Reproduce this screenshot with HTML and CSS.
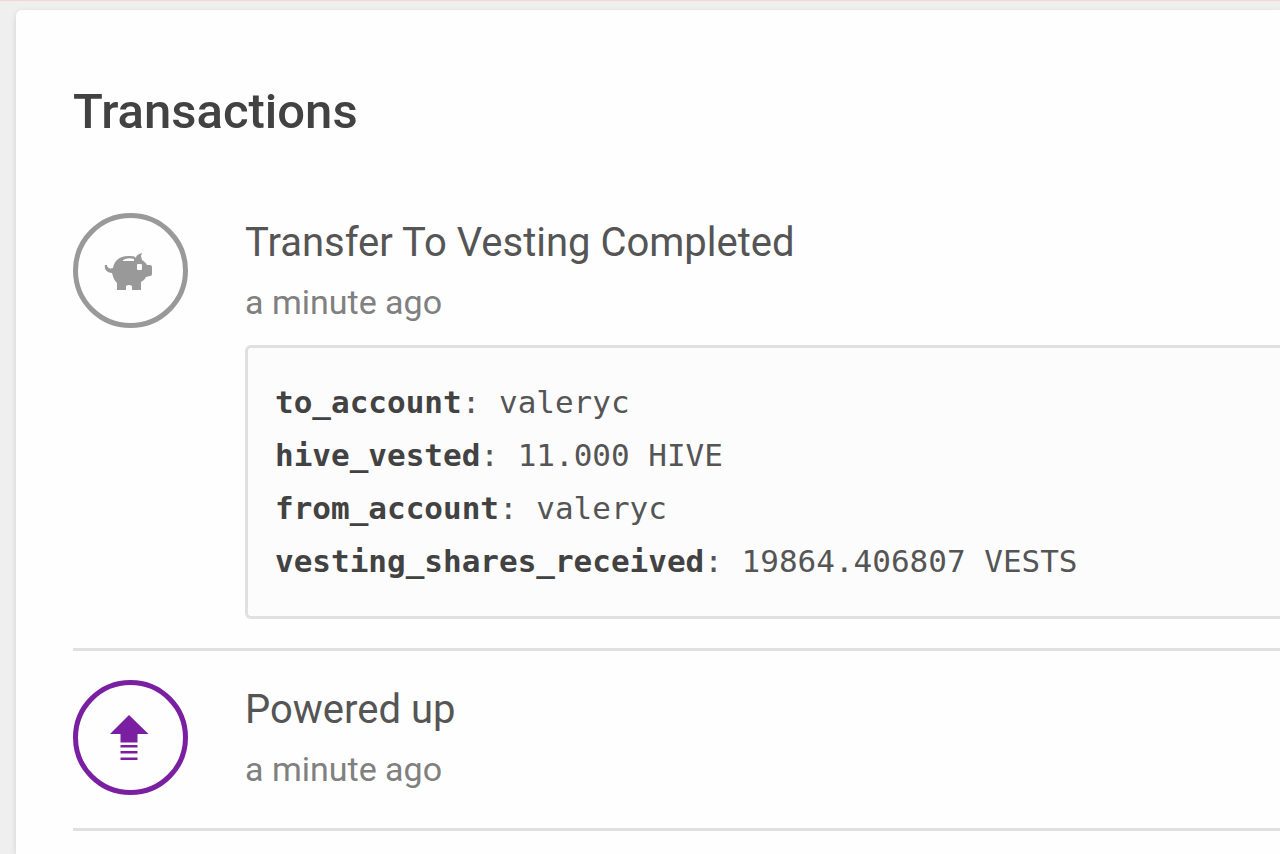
FILE: index.html
```html
<!DOCTYPE html>
<html lang="en">
<head>
  <meta charset="UTF-8">
  <meta name="viewport" content="width=device-width, initial-scale=1.0">
  <title>Transactions</title>
  <link rel="stylesheet" href="styles.css">
</head>
<body>
  <main class="card">
    <h1>Transactions</h1>
    <ul class="transactions">
      <li class="transaction">
        <div class="icon icon-vesting">
          <svg viewBox="0 -3 65 59" width="65" height="59" aria-hidden="true">
            <path fill="currentColor" fill-rule="evenodd" d="M9 21 C9 24 12 25 15 24 C16 17 21 12 30 12 C34 12 37 12 38 14 C38 11 41 10 44 9 L43 12 L44 16 C46 17 48 19 49 21 H52 Q54 21 54 23 V30 Q54 32 52 32 L48 33 C47 35 45 37 43 38 V46 H34 V42 Q31 40 28 42 V46 H19 V39 C16 36 15 33 14 29 C9 29 6 25 7 21 Z M25 16 Q30 13 36 15 V17 H25 Z M40 20 H43 Q44 20 44 21 V25 Q44 26 43 26 H40 Q39 26 39 25 V21 Q39 20 40 20 Z"/>
          </svg>
        </div>
        <div class="body">
          <h2>Transfer To Vesting Completed</h2>
          <p class="time">a minute ago</p>
          <pre class="details"><b>to_account</b>: valeryc
<b>hive_vested</b>: 11.000 HIVE
<b>from_account</b>: valeryc
<b>vesting_shares_received</b>: 19864.406807 VESTS</pre>
        </div>
      </li>
      <li class="transaction">
        <div class="icon icon-power">
          <svg viewBox="0 0 42 46" width="42" height="46" aria-hidden="true">
            <path fill="currentColor" d="M19 0 L38.5 19 H27.5 V27.5 H10.5 V19 H0 Z M10.5 30 H27.5 V32.5 H10.5 Z M10.5 36 H27.5 V38.5 H10.5 Z M10.5 42.5 H27.5 V45 H10.5 Z"/>
          </svg>
        </div>
        <div class="body">
          <h2>Powered up</h2>
          <p class="time">a minute ago</p>
        </div>
      </li>
    </ul>
  </main>
</body>
</html>
```
FILE: styles.css
```css
* {
  box-sizing: border-box;
}
body {
  margin: 0;
  padding: 9px 0 0 16px;
  background-color: #efefef;
  border-top: 1px solid #f0d8da;
  font-family: Roboto, Arial, sans-serif;
  color: #424242;
}
.card {
  min-height: calc(100vh - 10px);
  padding: 58px 0 22px 57px;
  background: #fefefe;
  border-radius: 6px 0 0 0;
  box-shadow: 0 2px 6px rgba(0, 0, 0, 0.12);
}
h1 {
  margin: 0 0 57px;
  font-size: 49px;
  font-weight: 500;
  line-height: 88px;
}
.transactions {
  margin: 0;
  padding: 0;
  list-style: none;
}
.transaction {
  display: flex;
  gap: 57px;
  padding-bottom: 29px;
  border-bottom: 3px solid #e0e0e0;
}
.transaction + .transaction {
  padding-top: 29px;
}
.icon {
  display: flex;
  flex: none;
  align-items: center;
  justify-content: center;
  width: 115px;
  height: 115px;
  border: 5px solid currentColor;
  border-radius: 50%;
}
.icon-vesting {
  color: #999;
}
.icon-power {
  color: #7b1fa2;
}
.body {
  flex: 1;
  min-width: 0;
}
h2 {
  margin: 0;
  font-size: 40px;
  font-weight: 400;
  line-height: 60px;
  color: #555;
}
.time {
  margin: 0;
  font-size: 34px;
  line-height: 59px;
  color: #808080;
}
.details {
  margin: 13px 0 0;
  padding: 28px 0 28px 27px;
  background: #fcfcfc;
  border: 3px solid #e0e0e0;
  border-right: none;
  border-radius: 6px 0 0 6px;
  font-family: "DejaVu Sans Mono", monospace;
  font-size: 31px;
  line-height: 53px;
  color: #555;
  overflow: hidden;
}
.details b {
  color: #424242;
}
```
